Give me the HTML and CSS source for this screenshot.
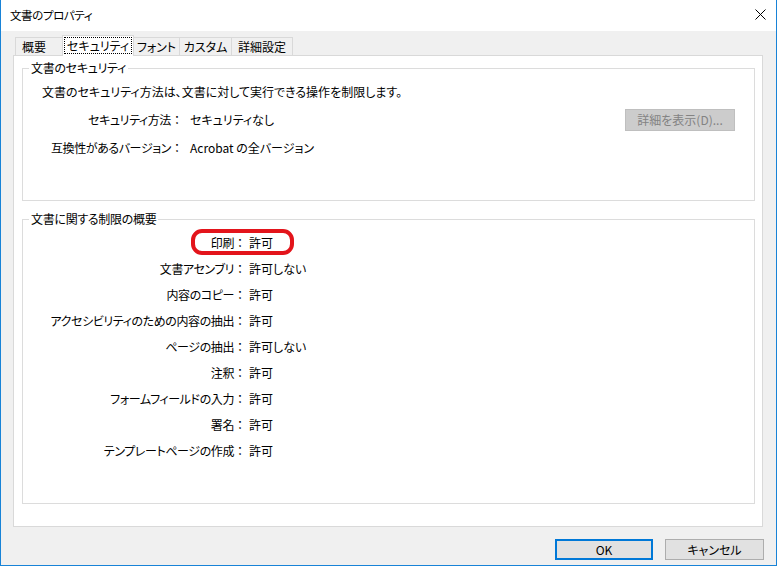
FILE: index.html
```html
<!DOCTYPE html>
<html lang="ja">
<head>
<meta charset="utf-8">
<title>文書のプロパティ</title>
<link rel="stylesheet" href="styles.css">
</head>
<body>
<div class="window">
  <div class="titlebar">
    <span class="title">文書のプロパティ</span>
    <svg class="close" width="11" height="11" viewBox="0 0 11 11"><path d="M0.5 0.5 L10.5 10.5 M10.5 0.5 L0.5 10.5" stroke="#000" stroke-width="1" fill="none"/></svg>
  </div>
  <div class="body">
    <div class="tabs">
      <div class="tab t1">概要</div>
      <div class="tab active"><span class="focus">セキュリティ</span></div>
      <div class="tab t3">フォント</div>
      <div class="tab t4">カスタム</div>
      <div class="tab t5">詳細設定</div>
    </div>
    <div class="panel">
      <fieldset class="group g1">
        <legend>文書のセキュリティ</legend>
        <div class="g1-inner">
          <div class="desc">文書のセキュリティ方法は、文書に対して実行できる操作を制限します。</div>
          <div class="sec-grid">
            <div class="lbl">セキュリティ方法<span class="c">：</span></div>
            <div class="val">セキュリティなし</div>
            <div class="btn-detail">詳細を表示(D)...</div>
            <div class="lbl">互換性があるバージョン<span class="c">：</span></div>
            <div class="val">Acrobat の全バージョン</div>
            <div></div>
          </div>
        </div>
      </fieldset>
      <fieldset class="group g2">
        <legend>文書に関する制限の概要</legend>
        <div class="mark"></div>
        <div class="perm-grid">
          <div class="lbl">印刷<span class="c">：</span></div><div class="val">許可</div>
          <div class="lbl">文書アセンブリ<span class="c">：</span></div><div class="val">許可しない</div>
          <div class="lbl">内容のコピー<span class="c">：</span></div><div class="val">許可</div>
          <div class="lbl">アクセシビリティのための内容の抽出<span class="c">：</span></div><div class="val">許可</div>
          <div class="lbl">ページの抽出<span class="c">：</span></div><div class="val">許可しない</div>
          <div class="lbl">注釈<span class="c">：</span></div><div class="val">許可</div>
          <div class="lbl">フォームフィールドの入力<span class="c">：</span></div><div class="val">許可</div>
          <div class="lbl">署名<span class="c">：</span></div><div class="val">許可</div>
          <div class="lbl">テンプレートページの作成<span class="c">：</span></div><div class="val">許可</div>
        </div>
      </fieldset>
    </div>
    <div class="buttons">
      <div class="btn ok">OK</div>
      <div class="btn cancel">キャンセル</div>
    </div>
  </div>
</div>
</body>
</html>
```

FILE: styles.css
```css
* { box-sizing: border-box; }
html, body { margin: 0; padding: 0; background: #ffffff; }
body {
  font-family: "Noto Sans CJK JP", "Noto Sans", sans-serif;
  font-size: 12px;
  font-feature-settings: "palt";
  color: #000;
}
.window {
  width: 777px;
  height: 566px;
  border: 1px solid #1883d7;
  border-top: none;
  display: flex;
  flex-direction: column;
  background: #f0f0f0;
}
.titlebar {
  height: 31px;
  background: #ffffff;
  display: flex;
  align-items: center;
  justify-content: space-between;
  padding: 0 10px 2px 9px;
}
.title { font-size: 11.5px; line-height: 16px; letter-spacing: -0.4px; }
.close { display: block; }
.body {
  flex: 1;
  padding: 5px 13px 0 12px;
  display: flex;
  flex-direction: column;
}
.tabs {
  display: flex;
  align-items: flex-end;
  height: 19px;
  padding-left: 2px;
}
.tab {
  height: 18px;
  border: 1px solid #d9d9d9;
  border-bottom: none;
  background: #f0f0f0;
  line-height: 16px;
  display: flex;
  align-items: center;
  justify-content: center;
  margin-left: -1px;
}
.t1 { width: 48px; margin-left: 0; justify-content: flex-start; padding-left: 6px; }
.active {
  width: 72px;
  height: 21px;
  margin-bottom: -1px;
  background: #ffffff;
  position: relative;
  z-index: 1;
  padding-bottom: 2px;
}
.focus {
  border: 1px dotted #000;
  padding: 0 2px;
  line-height: 15px;
}
.t3 { width: 47px; }
.t4 { width: 53px; }
.t5 { width: 62px; }
.panel {
  height: 472px;
  background: #ffffff;
  border: 1px solid #d9d9d9;
  padding: 4px 7px 0 8px;
}
.group {
  margin: 0;
  border: 1px solid #dcdcdc;
  padding: 0;
  min-width: 0;
}
.group legend {
  margin-left: 6px;
  padding: 0 2px;
  line-height: 16px;
  letter-spacing: -0.3px;
}
.c { font-feature-settings: normal; letter-spacing: 0; }
.g1 { height: 141px; }
.g1-inner { padding: 8px 19px 0 19px; }
.desc { line-height: 16px; }
.sec-grid {
  margin-top: 9px;
  display: grid;
  grid-template-columns: 141px 1fr auto;
  grid-template-rows: 22px 16px;
  row-gap: 9px;
  column-gap: 7px;
  align-items: center;
}
.lbl { text-align: right; white-space: nowrap; line-height: 16px; letter-spacing: -0.4px; }
.val { white-space: nowrap; line-height: 16px; }
.btn-detail {
  width: 110px;
  height: 22px;
  background: #cccccc;
  border: 1px solid #bfbfbf;
  color: #838383;
  display: flex;
  align-items: center;
  justify-content: center;
  line-height: 16px;
}
.g2 {
  margin-top: 10px;
  height: 293px;
  padding: 3px 0 0 0;
  position: relative;
}
.perm-grid {
  display: grid;
  grid-template-columns: 223px 1fr;
  grid-auto-rows: 26px;
  column-gap: 3px;
  align-items: center;
}
.mark {
  position: absolute;
  left: 168px;
  top: 2px;
  width: 103px;
  height: 26px;
  border: 4px solid #e3141b;
  border-radius: 11px;
}
.buttons {
  display: flex;
  justify-content: flex-end;
  gap: 12px;
  margin-top: 12px;
  margin-right: -1px;
}
.btn {
  width: 98px;
  height: 21px;
  background: #e1e1e1;
  border: 1px solid #adadad;
  display: flex;
  align-items: center;
  justify-content: center;
  line-height: 16px;
}
.ok { border: 2px solid #0078d7; }
.cancel { width: 99px; }
```
